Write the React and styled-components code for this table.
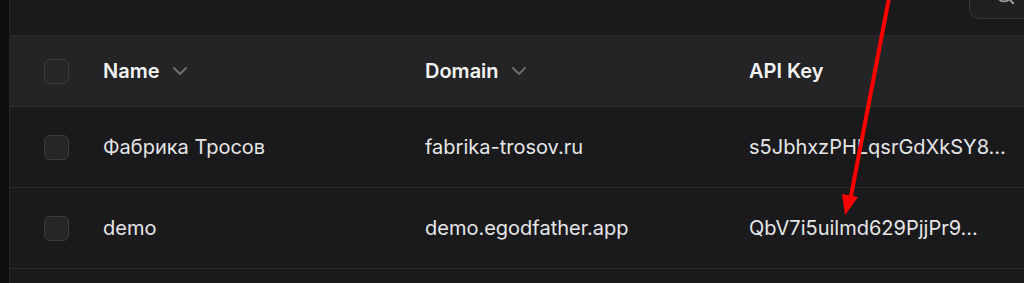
import styled, { createGlobalStyle } from "styled-components";
import { Search, ChevronDown } from "lucide-react";

const GlobalStyle = createGlobalStyle`
  html, body {
    margin: 0;
    padding: 0;
    background: #0e0e10;
    overflow: hidden;
  }
  body {
    font-family: Inter, "Noto Sans", sans-serif;
    -webkit-font-smoothing: antialiased;
  }
`;

const projects = [
  { id: 1, name: "Фабрика Тросов", domain: "fabrika-trosov.ru", key: "s5JbhxzPHLqsrGdXkSY8..." },
  { id: 2, name: "demo", domain: "demo.egodfather.app", key: "QbV7i5uilmd629PjjPr9..." },
];

function App() {
  return (
    <>
      <GlobalStyle />
      <Page>
        <Panel>
          <Toolbar>
            <SearchBtn>
              <Search size={22} strokeWidth={2} />
            </SearchBtn>
          </Toolbar>
          <Table>
            <HeadRow>
              <CheckCell>
                <Checkbox />
              </CheckCell>
              <HeadCell>
                Name <ChevronDown size={24} strokeWidth={2} />
              </HeadCell>
              <HeadCell>
                Domain <ChevronDown size={24} strokeWidth={2} />
              </HeadCell>
              <HeadCell>API Key</HeadCell>
            </HeadRow>
            {projects.map((p) => (
              <Row key={p.id}>
                <CheckCell>
                  <Checkbox />
                </CheckCell>
                <Cell>{p.name}</Cell>
                <Cell>{p.domain}</Cell>
                <Cell>{p.key}</Cell>
              </Row>
            ))}
          </Table>
        </Panel>
        <Arrow viewBox="0 0 1024 283" width="1024" height="283">
          <line x1="889" y1="-2" x2="851" y2="196" stroke="#ff0000" strokeWidth="4" />
          <polygon points="845,215 842,194 858,197" fill="#ff0000" />
        </Arrow>
      </Page>
    </>
  );
}

const Page = styled.div`
  position: relative;
  display: flex;
  height: 283px;
  padding-left: 9px;
`;

const Panel = styled.div`
  flex: 1;
  background: #1a1a1c;
  border-left: 1px solid #262628;
  display: flex;
  flex-direction: column;
`;

const Toolbar = styled.div`
  height: 35px;
  display: flex;
  justify-content: flex-end;
  align-items: flex-end;
  overflow: hidden;
  border-bottom: 1px solid #2c2c2f;
`;

const SearchBtn = styled.div`
  width: 84px;
  height: 48px;
  margin-right: -29px;
  margin-bottom: 16px;
  flex-shrink: 0;
  box-sizing: border-box;
  border: 1px solid #38383b;
  border-radius: 10px;
  background: #202022;
  color: #a0a0a4;
  display: flex;
  align-items: flex-end;
  padding: 0 0 12px 24px;
`;

const Table = styled.div`
  display: flex;
  flex-direction: column;
`;

const HeadRow = styled.div`
  display: grid;
  grid-template-columns: 93px 322px 324px 1fr;
  align-items: center;
  height: 70px;
  background: #242426;
  border-bottom: 1px solid #2e2e31;
`;

const Row = styled(HeadRow)`
  height: 80px;
  background: #1a1a1c;
  border-bottom: 1px solid #29292c;
`;

const CheckCell = styled.div`
  padding-left: 34px;
  display: flex;
  align-items: center;
`;

const Checkbox = styled.div`
  width: 25px;
  height: 25px;
  box-sizing: border-box;
  border-radius: 6px;
  border: 1px solid #3b3b3e;
  background: #262628;
`;

const HeadCell = styled.div`
  display: flex;
  align-items: center;
  gap: 8px;
  color: #f4f4f5;
  font-size: 20px;
  font-weight: 600;
  svg {
    color: #6c6c70;
  }
`;

const Cell = styled.div`
  color: #e6e6e8;
  font-size: 20px;
  font-weight: 400;
  white-space: nowrap;
`;

const Arrow = styled.svg`
  position: absolute;
  left: 0;
  top: 0;
  pointer-events: none;
`;

export default App;
